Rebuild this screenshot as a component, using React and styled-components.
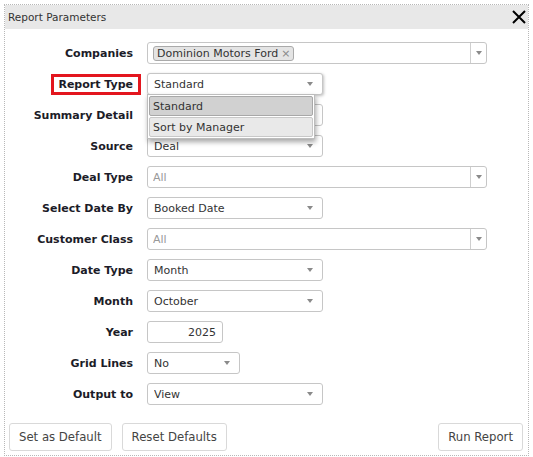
import React from 'react'
import styled, { createGlobalStyle } from 'styled-components'

const GlobalStyle = createGlobalStyle`
  html, body {
    margin: 0;
    padding: 0;
    background: #fff;
    font-family: "DejaVu Sans", Verdana, sans-serif;
  }
`

const Window = styled.div`
  box-sizing: border-box;
  margin: 4px 0 0 4px;
  width: 525px;
  height: 452px;
  border: 1px dotted #b8b8b8;
  display: flex;
  flex-direction: column;
`

const Header = styled.div`
  height: 24px;
  background: #e8e8e8;
  display: flex;
  align-items: center;
  justify-content: space-between;
  padding: 0 1px 0 3px;
`

const Title = styled.span`
  font-size: 10.5px;
  color: #333;
`

const Body = styled.div`
  flex: 1;
  display: flex;
  flex-direction: column;
  padding: 13px 5px 4px 4px;
`

const Form = styled.div`
  display: grid;
  grid-template-columns: 124px 1fr;
  column-gap: 14px;
  row-gap: 9px;
  grid-auto-rows: 22px;
  align-items: center;
`

const Label = styled.span`
  justify-self: end;
  font-size: 11px;
  font-weight: bold;
  color: #1c1c28;
  white-space: nowrap;
  ${p => p.$highlight && `
    border: 3px solid #e3161e;
    padding: 1px 5px 1px 4px;
    margin-right: -8px;
  `}
`

const Field = styled.div`
  position: relative;
  box-sizing: border-box;
  width: ${p => p.$width}px;
  height: 22px;
  border: 1px solid #c6c6c6;
  border-radius: 3px;
  background: #fff;
  display: flex;
  align-items: center;
  padding-left: ${p => (p.$multi ? 5 : 6)}px;
  font-size: 11px;
  color: ${p => (p.$placeholder ? '#999' : '#333')};
  justify-content: ${p => (p.$right ? 'flex-end' : 'flex-start')};
  padding-right: ${p => (p.$right ? 6 : 0)}px;
  box-shadow: ${p => (p.$open ? '1px 1px 3px rgba(0,0,0,0.25)' : 'none')};
  z-index: ${p => (p.$open ? 2 : 'auto')};
`

const Value = styled.span`
  flex: 1;
  white-space: nowrap;
  overflow: hidden;
`

const Caret = styled.span`
  width: 0;
  height: 0;
  border-left: 3.5px solid transparent;
  border-right: 3.5px solid transparent;
  border-top: 4px solid #8a8a8a;
  margin-right: ${p => (p.$inBox ? 0 : 9)}px;
`

const ArrowBox = styled.div`
  align-self: stretch;
  width: 15px;
  border-left: 1px solid #cfcfcf;
  display: flex;
  align-items: center;
  justify-content: center;
`

const Tag = styled.span`
  display: inline-flex;
  align-items: center;
  height: 13px;
  padding: 0 3px;
  background: #e4e4e4;
  border: 1px solid #aaa;
  border-radius: 3px;
  font-size: 11px;
  color: #333;
`

const TagRemove = styled.span`
  margin-left: 3px;
  color: #888;
  font-size: 11px;
`

const Dropdown = styled.div`
  position: absolute;
  top: 100%;
  left: -1px;
  width: 168px;
  box-sizing: border-box;
  background: #fff;
  border: 1px solid #bdbdbd;
  box-shadow: 1px 3px 5px rgba(0,0,0,0.35);
  padding: 1px;
  display: flex;
  flex-direction: column;
  gap: 1px;
  z-index: 5;
`

const Option = styled.div`
  box-sizing: border-box;
  height: 20px;
  display: flex;
  align-items: center;
  padding-left: 3px;
  border: 1px solid ${p => (p.$active ? '#a8a8a8' : '#c8c8c8')};
  border-radius: 2px;
  background: ${p => (p.$active ? '#d1d1d1' : '#e9e9e9')};
  font-size: 11px;
  color: #333;
`

const Footer = styled.div`
  margin-top: auto;
  display: flex;
  gap: 10px;
`

const Button = styled.button`
  height: 28px;
  box-sizing: border-box;
  padding: 0 9px;
  background: #fff;
  border: 1px solid #d9d9d9;
  border-radius: 3px;
  font-family: "DejaVu Sans", Verdana, sans-serif;
  font-size: 11.7px;
  color: #444;
  margin-left: ${p => (p.$push ? 'auto' : '0')};
`

const CloseIcon = () => (
  <svg width="16" height="16" viewBox="0 0 16 16">
    <path d="M2 2 L14 14 M14 2 L2 14" stroke="#000" strokeWidth="2" strokeLinecap="butt" />
  </svg>
)

const Select = ({ value, width = 176, placeholder, open, children }) => (
  <Field $width={width} $placeholder={placeholder} $open={open}>
    <Value>{value}</Value>
    <Caret />
    {children}
  </Field>
)

const MultiSelect = ({ children, placeholder }) => (
  <Field $width={340} $multi $placeholder={placeholder}>
    <Value>{children}</Value>
    <ArrowBox><Caret $inBox /></ArrowBox>
  </Field>
)

const App = () => {
  return (
    <>
      <GlobalStyle />
      <Window>
        <Header>
          <Title>Report Parameters</Title>
          <CloseIcon />
        </Header>
        <Body>
          <Form>
            <Label>Companies</Label>
            <MultiSelect>
              <Tag>Dominion Motors Ford<TagRemove>×</TagRemove></Tag>
            </MultiSelect>

            <Label $highlight>Report Type</Label>
            <Select value='Standard' open>
              <Dropdown>
                <Option $active>Standard</Option>
                <Option>Sort by Manager</Option>
              </Dropdown>
            </Select>

            <Label>Summary Detail</Label>
            <Select value='' />

            <Label>Source</Label>
            <Select value='Deal' />

            <Label>Deal Type</Label>
            <MultiSelect placeholder>All</MultiSelect>

            <Label>Select Date By</Label>
            <Select value='Booked Date' />

            <Label>Customer Class</Label>
            <MultiSelect placeholder>All</MultiSelect>

            <Label>Date Type</Label>
            <Select value='Month' />

            <Label>Month</Label>
            <Select value='October' />

            <Label>Year</Label>
            <Field $width={76} $right>2025</Field>

            <Label>Grid Lines</Label>
            <Select value='No' width={93} />

            <Label>Output to</Label>
            <Select value='View' />
          </Form>
          <Footer>
            <Button>Set as Default</Button>
            <Button>Reset Defaults</Button>
            <Button $push>Run Report</Button>
          </Footer>
        </Body>
      </Window>
    </>
  )
}

export default App
